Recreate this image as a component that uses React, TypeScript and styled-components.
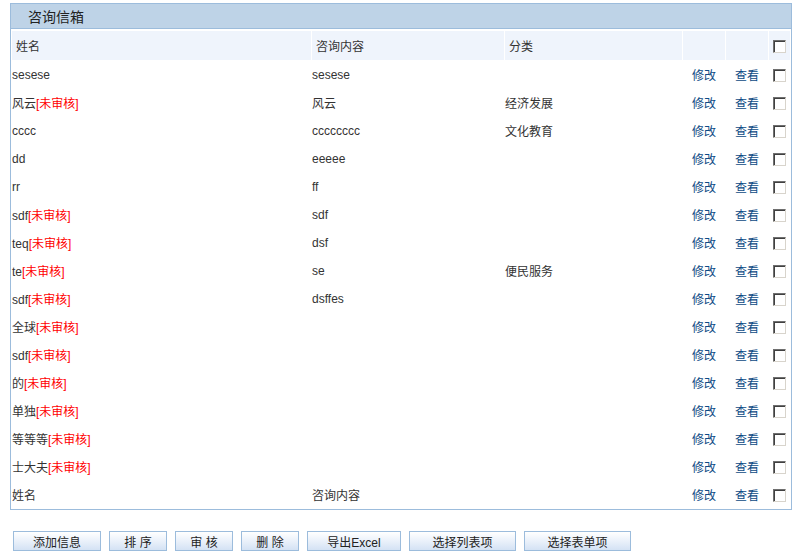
import React from "react";
import styled, { createGlobalStyle } from "styled-components";

const GlobalStyle = createGlobalStyle`
  html, body {
    margin: 0;
    padding: 0;
    background: #fff;
  }
  body {
    font-family: "Liberation Sans", "Noto Sans CJK SC", sans-serif;
    font-size: 12px;
    color: #333;
  }
`;

const Page = styled.div`
  padding: 3px 0 0 10px;
  width: 782px;
`;

const Box = styled.div`
  border: 1px solid #9cbcdc;
  background: #fff;
`;

const TitleBar = styled.div`
  height: 24px;
  background: #bed3e7;
  border-bottom: 1px solid #9cbcdc;
  padding-left: 17px;
  display: flex;
  align-items: center;
  font-size: 14px;
  color: #222;
`;

const Table = styled.table`
  width: 100%;
  border-collapse: separate;
  border-spacing: 1px;
  margin-top: 1px;
  table-layout: fixed;
`;

const Th = styled.th<{ $center?: boolean }>`
  height: 29px;
  padding: ${(p) => (p.$center ? "0" : "0 0 0 4px")};
  background: #eff4fc;
  font-weight: normal;
  text-align: ${(p) => (p.$center ? "center" : "left")};
  color: #333;
`;

const Td = styled.td<{ $center?: boolean }>`
  height: 27px;
  padding: 0;
  text-align: ${(p) => (p.$center ? "center" : "left")};
  white-space: nowrap;
`;

const Pending = styled.span`
  color: #ff0000;
`;

const Link = styled.a`
  color: #0d4a84;
  text-decoration: none;
`;

const Check = styled.input.attrs({ type: "checkbox" })`
  appearance: none;
  box-sizing: border-box;
  width: 13px;
  height: 13px;
  margin: 0;
  vertical-align: middle;
  background: #fff;
  border: 1px solid;
  border-color: #6f6f6f #d8d4cc #d8d4cc #6f6f6f;
  box-shadow: inset 1px 1px 0 #404040;
`;

const Buttons = styled.div`
  display: flex;
  gap: 8px;
  margin-top: 21px;
  padding-left: 3px;
`;

const Btn = styled.button<{ $w: number }>`
  box-sizing: border-box;
  width: ${(p) => p.$w}px;
  height: 20px;
  padding: 0;
  border: 1px solid #9cbcdc;
  background: linear-gradient(to bottom, #ffffff 0%, #eaf1fa 50%, #d4e2f4 100%);
  font-family: "Liberation Sans", "Noto Sans CJK SC", sans-serif;
  font-size: 12px;
  color: #222;
`;

type Row = { name: string; pending?: boolean; content?: string; cat?: string };

const rows: Row[] = [
  { name: "sesese", content: "sesese" },
  { name: "风云", pending: true, content: "风云", cat: "经济发展" },
  { name: "cccc", content: "cccccccc", cat: "文化教育" },
  { name: "dd", content: "eeeee" },
  { name: "rr", content: "ff" },
  { name: "sdf", pending: true, content: "sdf" },
  { name: "teq", pending: true, content: "dsf" },
  { name: "te", pending: true, content: "se", cat: "便民服务" },
  { name: "sdf", pending: true, content: "dsffes" },
  { name: "全球", pending: true },
  { name: "sdf", pending: true },
  { name: "的", pending: true },
  { name: "单独", pending: true },
  { name: "等等等", pending: true },
  { name: "士大夫", pending: true },
  { name: "姓名", content: "咨询内容" },
];

const buttons: { label: string; w: number }[] = [
  { label: "添加信息", w: 88 },
  { label: "排 序", w: 58 },
  { label: "审 核", w: 58 },
  { label: "删 除", w: 58 },
  { label: "导出Excel", w: 94 },
  { label: "选择列表项", w: 107 },
  { label: "选择表单项", w: 107 },
];

const App: React.FC = () => {
  return (
    <>
      <GlobalStyle />
      <Page>
        <Box>
          <TitleBar>咨询信箱</TitleBar>
          <Table>
            <colgroup>
              <col style={{ width: 299 }} />
              <col style={{ width: 192 }} />
              <col style={{ width: 177 }} />
              <col style={{ width: 42 }} />
              <col style={{ width: 42 }} />
              <col style={{ width: 21 }} />
            </colgroup>
            <thead>
              <tr>
                <Th>姓名</Th>
                <Th>咨询内容</Th>
                <Th>分类</Th>
                <Th />
                <Th />
                <Th $center>
                  <Check />
                </Th>
              </tr>
            </thead>
            <tbody>
              {rows.map((r, i) => (
                <tr key={i}>
                  <Td>
                    {r.name}
                    {r.pending && <Pending>[未审核]</Pending>}
                  </Td>
                  <Td>{r.content}</Td>
                  <Td>{r.cat}</Td>
                  <Td $center>
                    <Link href="#">修改</Link>
                  </Td>
                  <Td $center>
                    <Link href="#">查看</Link>
                  </Td>
                  <Td $center>
                    <Check />
                  </Td>
                </tr>
              ))}
            </tbody>
          </Table>
        </Box>
        <Buttons>
          {buttons.map((b) => (
            <Btn key={b.label} $w={b.w}>
              {b.label}
            </Btn>
          ))}
        </Buttons>
      </Page>
    </>
  );
};

export default App;
